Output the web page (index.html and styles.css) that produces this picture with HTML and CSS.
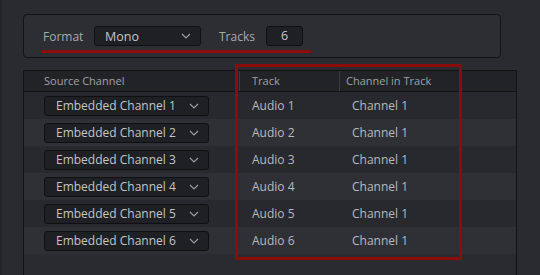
FILE: index.html
```html
<!DOCTYPE html>
<html lang="en">
<head>
    <meta charset="UTF-8">
    <title>Audio Channel Mapping</title>
    <link rel="stylesheet" href="styles.css">
</head>
<body>
    <div class="panel">
        <div class="group">
            <span class="label label-format">Format</span>
            <div class="select select-format">
                <span>Mono</span>
                <svg class="chevron" width="10" height="6" viewBox="0 0 10 6"><path d="M1 1 L5 5 L9 1" fill="none" stroke="#9a9ba0" stroke-width="1.2"/></svg>
            </div>
            <span class="label label-tracks">Tracks</span>
            <div class="num">6</div>
            <div class="mark-underline"></div>
        </div>

        <div class="table">
            <div class="row head">
                <div class="cell c1">Source Channel</div>
                <div class="cell c2">Track</div>
                <div class="cell c3">Channel in Track</div>
            </div>
            <div id="rows"></div>
            <div class="mark-box"></div>
        </div>
    </div>

    <script>
        // строим строки таблицы
        const rows = document.getElementById('rows');
        for (let i = 1; i <= 6; i++) {
            rows.innerHTML += `
                <div class="row ${i % 2 === 0 ? 'alt' : ''}">
                    <div class="cell c1">
                        <div class="select select-src">
                            <span>Embedded Channel ${i}</span>
                            <svg class="chevron" width="10" height="6" viewBox="0 0 10 6"><path d="M1 1 L5 5 L9 1" fill="none" stroke="#9a9ba0" stroke-width="1.2"/></svg>
                        </div>
                    </div>
                    <div class="cell c2">Audio ${i}</div>
                    <div class="cell c3">Channel 1</div>
                </div>
            `;
        }
    </script>
</body>
</html>
```

FILE: styles.css
```css
body {
    margin: 0;
    background: #2a2b30;
    font-family: "Open Sans", "Noto Sans", sans-serif;
    font-size: 12px;
    color: #b8b9bc;
    width: 540px;
    height: 275px;
    overflow: hidden;
}
.panel {
    height: 275px;
    border-left: 2px solid #232428;
    padding: 14px 0 0 21px;
    box-sizing: border-box;
}
.group {
    position: relative;
    width: 478px;
    height: 44px;
    box-sizing: border-box;
    border: 1px solid #131416;
    border-radius: 4px;
    background: #2d2e33;
    display: flex;
    align-items: center;
    padding: 0 0 0 19px;
}
.label {
    color: #a8a9ac;
    font-size: 12px;
    white-space: nowrap;
}
.label-format {
    width: 38px;
}
.label-tracks {
    width: 35px;
    margin-left: 18px;
}
.select {
    display: flex;
    align-items: center;
    justify-content: space-between;
    box-sizing: border-box;
    background: #1f2023;
    border: 1px solid #0f1012;
    border-radius: 3px;
    color: #c4c5c8;
}
.select-format {
    width: 107px;
    height: 20px;
    margin-left: 13px;
    padding: 0 9px 0 10px;
    font-size: 12.5px;
}
.num {
    width: 37px;
    height: 20px;
    box-sizing: border-box;
    margin-left: 12px;
    background: #1f2023;
    border: 1px solid #0f1012;
    border-radius: 3px;
    text-align: center;
    line-height: 18px;
    font-size: 12.5px;
    color: #c4c5c8;
}
.mark-underline {
    position: absolute;
    left: 17px;
    top: 35px;
    width: 270px;
    height: 3px;
    background: #8c0b0b;
}
.table {
    position: relative;
    margin-top: 12px;
    width: 494px;
    height: 206px;
    box-sizing: border-box;
    border: 1px solid #111214;
    border-bottom: none;
    background: #2a2b30;
}
.row {
    display: flex;
    height: 27px;
    align-items: center;
    background: #28292e;
}
.row.alt {
    background: #2f3035;
}
.row.head {
    height: 20px;
    background: #222327;
    border-bottom: 1px solid #111214;
    color: #a0a1a4;
    font-size: 11px;
}
.cell {
    box-sizing: border-box;
}
.c1 {
    width: 215px;
    padding-left: 20px;
}
.c2 {
    width: 100px;
    padding-left: 13px;
}
.c3 {
    flex: 1;
    padding-left: 13px;
}
.head .c2, .head .c3 {
    border-left: 1px solid #3b3c41;
    height: 20px;
    line-height: 20px;
}
.head .c2 {
    padding-left: 12px;
}
.head .c3 {
    padding-left: 6px;
}
.head .c1 {
    line-height: 20px;
}
.select-src {
    width: 165px;
    height: 20px;
    padding: 0 9px 0 11px;
    font-size: 12px;
}
.mark-box {
    position: absolute;
    left: 211px;
    top: -7px;
    width: 227px;
    height: 196px;
    box-sizing: border-box;
    border: 3px solid #8c0b0b;
}
```
